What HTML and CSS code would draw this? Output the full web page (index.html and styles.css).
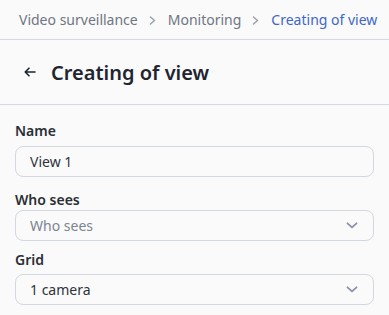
FILE: index.html
```html
<!DOCTYPE html>
<html lang="en">
<head>
  <meta charset="UTF-8">
  <title>Creating of view</title>
  <link rel="stylesheet" href="styles.css">
</head>
<body>
  <div class="breadcrumbs">
    <a href="#">Video surveillance</a>
    <svg class="sep" width="7" height="9" viewBox="0 0 7 9"><path d="M1.5 1 5.5 4.5 1.5 8" fill="none" stroke="#9aa1ab" stroke-width="1.5" stroke-linecap="round" stroke-linejoin="round"/></svg>
    <a href="#">Monitoring</a>
    <svg class="sep" width="7" height="9" viewBox="0 0 7 9"><path d="M1.5 1 5.5 4.5 1.5 8" fill="none" stroke="#9aa1ab" stroke-width="1.5" stroke-linecap="round" stroke-linejoin="round"/></svg>
    <span class="current">Creating of view</span>
  </div>

  <div class="page-title">
    <button class="back-btn" aria-label="Back">
      <svg width="12" height="10" viewBox="0 0 12 10"><path d="M5 1.2 1.2 5 5 8.8M1.2 5h9.8" fill="none" stroke="#1f2530" stroke-width="1.6" stroke-linecap="round" stroke-linejoin="round"/></svg>
    </button>
    <h1>Creating of view</h1>
  </div>

  <form class="form">
    <div class="field field-name">
      <label for="name">Name</label>
      <input id="name" class="input" type="text" value="View 1">
    </div>
    <div class="field field-tight">
      <label>Who sees</label>
      <div class="select placeholder">
        <span>Who sees</span>
        <svg class="chevron" width="12" height="7" viewBox="0 0 12 7"><path d="M1.5 1.3 6 5.3l4.5-4" fill="none" stroke="#8a94a3" stroke-width="1.8" stroke-linecap="round" stroke-linejoin="round"/></svg>
      </div>
    </div>
    <div class="field">
      <label>Grid</label>
      <div class="select">
        <span>1 camera</span>
        <svg class="chevron" width="12" height="7" viewBox="0 0 12 7"><path d="M1.5 1.3 6 5.3l4.5-4" fill="none" stroke="#8a94a3" stroke-width="1.8" stroke-linecap="round" stroke-linejoin="round"/></svg>
      </div>
    </div>
  </form>
</body>
</html>
```

FILE: styles.css
```css
body {
  font-family: "Noto Sans", "Open Sans", sans-serif;
  margin: 0;
  background-color: #fafafa;
  color: #2b2f36;
}

.breadcrumbs {
  display: flex;
  align-items: center;
  height: 39px;
  padding: 0 0 0 19px;
  border-bottom: 1px solid #d5dae1;
  font-size: 14px;
  white-space: nowrap;
  overflow: hidden;
}

.breadcrumbs > * {
  flex-shrink: 0;
}

.breadcrumbs a {
  color: #6f7682;
  text-decoration: none;
}

.breadcrumbs .sep {
  margin: 1px 12px 0 11px;
}

.breadcrumbs .current {
  color: #3e67c6;
}

.page-title {
  display: flex;
  align-items: center;
  height: 64px;
  padding: 0 24px;
  border-bottom: 1px solid #d5dae1;
}

.back-btn {
  background: none;
  border: none;
  padding: 0;
  margin-right: 15px;
  display: flex;
  cursor: pointer;
}

h1 {
  margin: 0;
  font-size: 20px;
  font-weight: 600;
  color: #1f2530;
}

.form {
  padding: 16px 15px 0;
}

.field {
  margin-bottom: 9px;
}

.field label {
  display: block;
  font-size: 14px;
  line-height: 20px;
  font-weight: 600;
  color: #2b2f36;
  margin-bottom: 4px;
}

.field-name {
  margin-bottom: 13px;
}

.field-name label {
  margin-bottom: 5px;
}

.field-tight label {
  margin-bottom: 0;
}

.input,
.select {
  box-sizing: border-box;
  width: 100%;
  height: 31px;
  padding: 0 14px;
  border: 1px solid #d3d9e1;
  border-radius: 8px;
  background-color: #fafafa;
  font-family: inherit;
  font-size: 14px;
  color: #2f333a;
}

.input:focus {
  outline: none;
}

.select {
  display: flex;
  align-items: center;
  justify-content: space-between;
  padding-right: 15px;
}

.select.placeholder {
  color: #7c8491;
}
```
